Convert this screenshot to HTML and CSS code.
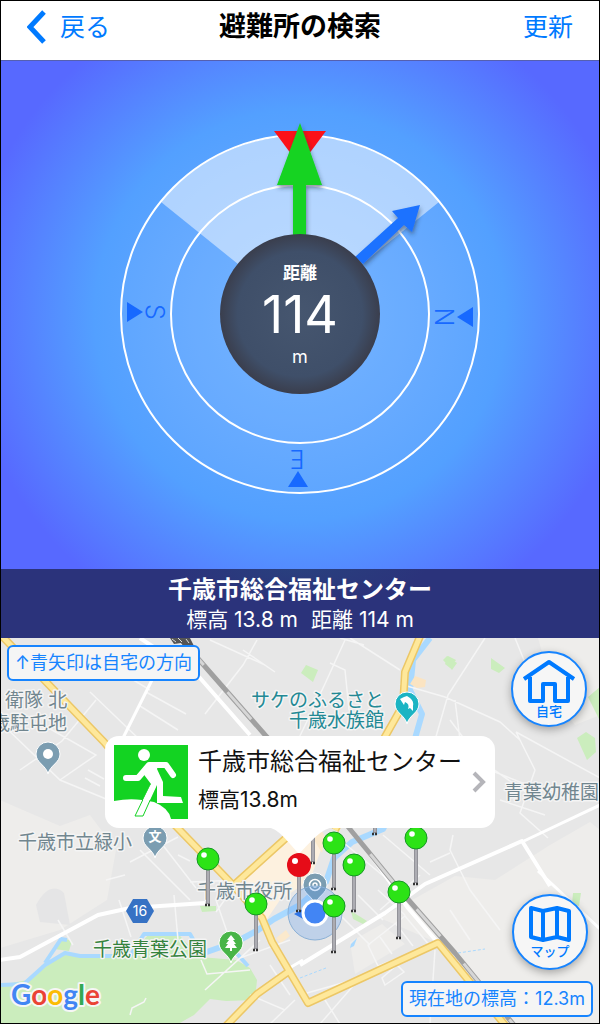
FILE: index.html
```html
<!DOCTYPE html>
<html lang="ja">
<head>
<meta charset="utf-8">
<meta name="viewport" content="width=device-width, initial-scale=1">
<title>避難所の検索</title>
<link rel="stylesheet" href="styles.css">
</head>
<body>
<div class="app">
  <header class="navbar">
    <button class="nav-btn" type="button">
      <svg class="chevron" viewBox="0 0 20 36" aria-hidden="true"><path d="M17 3 3 18 17 33"/></svg>
      戻る
    </button>
    <h1 class="title">避難所の検索</h1>
    <button class="nav-btn nav-end" type="button">更新</button>
  </header>

  <section class="compass" aria-label="コンパス">
    <svg class="dial" viewBox="1 61 598 508" aria-hidden="true">
      <defs>
        <radialGradient id="disc"><stop offset="0" stop-color="#46566f"/><stop offset=".78" stop-color="#3f4f69"/><stop offset="1" stop-color="#3a3e4d"/></radialGradient>
        <filter id="soft" x="-30%" y="-30%" width="160%" height="160%"><feDropShadow dx="1" dy="3" stdDeviation="2" flood-color="#234" flood-opacity=".5"/></filter>
      </defs>
      <circle cx="300" cy="314" r="179" fill="#fff" fill-opacity=".05"/>
      <path d="M300 314 161 202A179 179 0 0 1 439 202Z" fill="#fff" fill-opacity=".5"/>
      <g fill="none" stroke="#fff" stroke-width="2"><circle cx="300" cy="314" r="179"/><circle cx="300" cy="314" r="129"/></g>
      <g fill="#1769ff">
        <path d="M127 302v20l16-10zM473 307v20l-16-10zM288 487h20l-10-16z"/>
        <g class="cardinal">
          <text transform="translate(146 312) rotate(90)">S</text>
          <text transform="translate(454 317) rotate(-90)">N</text>
          <text transform="translate(297 450) rotate(180)">E</text>
        </g>
      </g>
      <path d="M274 131h52l-26 35z" fill="#fb1119"/>
      <g filter="url(#soft)">
        <path d="M300 123 322 185H306V240H293V185H277Z" fill="#13d322"/>
        <path d="M420 205 412 232 404 225 363 264 355 257 398 218 392 211Z" fill="#1b72ff"/>
      </g>
      <circle cx="300" cy="314" r="80" fill="url(#disc)"/>
    </svg>
    <div class="readout">
      <span class="readout-label">距離</span>
      <span class="readout-value">114</span>
      <span class="readout-unit">m</span>
    </div>
  </section>

  <section class="banner">
    <h2 class="banner-name">千歳市総合福祉センター</h2>
    <p class="banner-info"><span>標高 13.8 m</span><span>距離 114 m</span></p>
  </section>

  <section class="map" aria-label="地図">
    <svg class="map-art" viewBox="1 638 598 385">
      <defs>
        <g id="pin">
          <path d="M0 8V45" stroke="#929298" stroke-width="4"/><path d="M0 8V44" stroke="#b5b5bb" stroke-width="1.5"/>
          <path d="M-3 46H3" stroke="#333" stroke-width="2.5" stroke-dasharray="2 1"/>
          <circle r="11" stroke="#159724"/><circle cx="-4" cy="-4" r="2.8" fill="#fff"/>
        </g>
        <path id="drop" d="M0 20C-2 11-12 9-12 0A12 12 0 1 1 12 0C12 9 2 11 0 20Z"/>
      </defs>
      <rect x="0" y="638" width="600" height="386" fill="#e7e7e7"/>
      <g fill="#eeedeb">
        <path d="M0 800 60 826 90 815 116 850 107 900 60 930 0 948ZM538 638H600V715L575 725 556 700ZM380 918 455 876 495 880 550 845 590 822 600 830V1024H505L438 943ZM350 942 382 924 405 944 355 974Z"/>
      </g>
      <path d="M36 905Q50 880 64 893L70 925 40 922Z" fill="#e5e5e6"/>
      <path d="M236 884 286 836H326L310 880 280 900 263 925Z" fill="#fdf1df"/>
      <path d="M313 838l8-9 4 8-3 16zM276 938l10-8 4 6-10 8z" fill="#fbe9cc"/>
      <g fill="#cbedbd">
        <path d="M0 985 28 980 64 953 82 958 130 955 149 934 180 936 200 957 236 960 250 968 257 980 255 1000 226 1001 210 999 194 1015 178 1024H0Z"/>
        <path d="M54 949 63 938 72 941 69 951ZM448 656l8 4-6 8-5-4zM491 658l14 10-6 5-8-4zM588 697l12-10v34zM577 738l9-6 9 6 1 14-9 8zM573 893h8l-2 13-7-2zM351 911l16 10-4 3-10-5zM200 906h16v5l-14 1zM301 673l5-8 12 5-5 12zM443 660l4-4 10 7-5 7z"/>
      </g>
      <g fill="none" stroke="#a9d9ff" stroke-linejoin="round">
        <path stroke-width="6" d="M430 638 413 660 410 690 422 714 414 742 398 800 383 829 352 842 334 858 326 882 300 905 274 919 258 930 238 941 201 954"/>
        <path stroke-width="4" d="M0 985 24 984 45 965 65 953 80 956 130 956 144 934 190 934 202 955M232 948 248 966M45 963 61 939 67 940"/>
        <path stroke-width="1" stroke-dasharray="3 2" d="M300 978 326 968M458 953 485 949"/>
      </g>
      <path d="M351 944l6-6-3 8-4 2z" fill="#a9d9ff"/>
      <g fill="none" stroke="#f5f5f5" stroke-width="1.5">
        <path d="M0 722 60 780 128 808M60 780 96 755 45 726M96 700 62 741 20 770M88 770 104 779M85 778 100 786M90 692 140 740M100 660 150 690M140 706 178 730M146 692 186 714M257 640 243 665 205 714M265 665 210 640M243 650 275 672M240 710 268 735M345 640 324 686 298 740M330 663 345 670 349 710M350 638 400 670M364 645 340 638M485 638 448 695 435 740M515 638 526 665M400 684 445 697 500 722 520 740M455 700 460 740M516 732 600 778M516 732 535 770 520 813 548 838M495 772 540 790 600 792M500 800 545 815M450 720 480 760 530 795M453 835 450 850 470 890 500 930M430 862 450 853M130 862 178 837M140 850 190 900M155 835 196 888M168 820 220 876M178 855 190 861M106 880 125 875M58 920 73 945M119 900 131 937M174 895 178 940M190 882 240 880M216 900 236 958M236 884 216 912M240 958 290 940M201 960 207 974 250 970M270 965 290 995M205 990 260 940M380 910 420 875M358 895 383 920M340 915 370 945M378 890 405 915M368 945 405 916 430 946 378 966ZM380 937 392 954M396 924 413 946M450 910 470 940M338 838 400 890M383 835 430 875M385 985 404 972 397 965 382 978ZM300 995 360 978 320 1024M325 1000 340 1024M430 1024 435 950M130 1015 132 1008 144 1002 146 998M250 995 285 1010M270 1024 295 1000"/>
      </g>
      <g fill="none" stroke="#fff" stroke-linejoin="round">
        <path stroke-width="4" d="M0 960 20 957 98 915 130 908 205 903M300 965 385 913 425 884 522 841 550 886"/>
        <path stroke-width="4" d="M140 638 200 678 250 735M350 828 378 865 408 908 438 943"/>
        <path stroke-width="3" d="M122 740 152 680M524 841 600 805M538 871 600 929M286 970 303 960"/>
      </g>
      <g fill="none" stroke-linejoin="round">
        <path stroke="#ecc766" stroke-width="8" d="M0 634 104 742 166 816 232 884 262 918 272 942 308 1003 438 943 509 1030M235 884 286 838M222 1030 257 994 288 972M421 634 405 672 403 705 382 742 335 830"/>
        <path stroke="#fee89b" stroke-width="5" d="M0 634 104 742 166 816 232 884 262 918 272 942 308 1003 438 943 509 1030M235 884 286 838M222 1030 257 994 288 972M421 634 405 672 403 705 382 742 335 830"/>
        <path stroke="#a0a0a0" stroke-width="5" d="M180 638 266 736 345 823 398 888 455 953 518 1030"/>
        <path stroke="#d6d6d6" stroke-width="3" stroke-dasharray="36 36" d="M180 638 266 736 345 823 398 888 455 953 518 1030"/>
      </g>
      <path d="M170 638h20l5 10-9 1-5-6-7 1z" fill="#555"/><path d="m172 639 4 3m2-4 4 4m4-3 3 4" stroke="#ddd"/>
      <path d="M410 684l5-8 11 4-1 7-8 1z" fill="#fbe4c2"/>

      <g class="place">
        <text class="gray" x="5" y="707">衛隊 北</text>
        <text class="gray" x="-9" y="730">歳駐屯地</text>
        <text class="gray" x="18" y="849">千歳市立緑小</text>
        <text class="gray" x="504" y="799">青葉幼稚園</text>
        <text class="gray" x="197" y="898">千歳市役所</text>
        <text class="teal" x="251" y="707">サケのふるさと</text>
        <text class="teal" x="289" y="727">千歳水族館</text>
        <text class="green" x="93" y="956">千歳青葉公園</text>
      </g>

      <g stroke="#fff" stroke-width="1">
        <use href="#drop" x="48" y="754" fill="#7b9db1"/>
        <use href="#drop" x="155" y="838" fill="#7b9db1"/>
        <use href="#drop" x="315" y="885" fill="#7b9db1"/>
        <use href="#drop" x="407" y="704" fill="#1bb4c3"/>
        <use href="#drop" x="231" y="943" fill="#48b548"/>
      </g>
      <circle cx="48" cy="754" r="5" fill="#fff"/>
      <text class="poi" x="155" y="841">文</text>
      <g fill="none" stroke="#fff" stroke-width="1.5"><circle cx="315" cy="885" r="5.5"/><circle cx="315" cy="885" r="2"/></g>
      <path d="M400 699 404 697 407 696 410 698Q414 701 413 706L413 711 410 708 408 709Q410 704 405 702L404 705 402 702Z" fill="#fff"/>
      <path d="M231 935l4 5h-2l3 4h-2l3 4h-5v3h-2v-3h-5l3-4h-2l3-4h-2z" fill="#fff"/>

      <path d="M126 911 133 899H147L154 911 147 923H133Z" fill="#3672c4"/>
      <text class="route" x="140" y="916">16</text>

      <circle cx="315" cy="913" r="27" fill="#5b9bf0" fill-opacity=".28" stroke="#8ab0d6"/>
      <path d="M294 914l11-6v12z" fill="#2f76e8"/>
      <circle cx="315" cy="913" r="12" fill="#4285f4" stroke="#fff" stroke-width="3"/>

      <g fill="#2ce316">
        <use href="#pin" x="313" y="817"/><use href="#pin" x="375" y="788"/>
        <use href="#pin" x="208" y="859"/><use href="#pin" x="416" y="838"/>
        <use href="#pin" x="334" y="843"/><use href="#pin" x="354" y="865"/>
        <use href="#pin" x="399" y="892"/><use href="#pin" x="256" y="904"/>
        <use href="#pin" x="334" y="906"/>
      </g>
      <path d="M267 827C278 829 283 836 299 854 316 836 322 829 334 827Z" fill="#fff"/>
      <use href="#pin" x="299" y="865" fill="#e60c18"/><circle cx="299" cy="865" r="12" fill="#e60c18"/><circle cx="295" cy="861" r="3" fill="#fff"/>
      <text class="google" x="11" y="1005"><tspan fill="#4285f4">G</tspan><tspan fill="#ea4335">o</tspan><tspan fill="#fbbc05">o</tspan><tspan fill="#4285f4">g</tspan><tspan fill="#34a853">l</tspan><tspan fill="#ea4335">e</tspan></text>
    </svg>

    <p class="chip chip-home">↑青矢印は自宅の方向</p>
    <button class="callout" type="button">
      <svg class="exit" viewBox="0 0 74 74" aria-hidden="true">
        <path fill="#13d322" d="M0 0H74V74H0Z"/>
        <path fill="#fff" d="M0 56Q15 53 28 55L40 57Q55 63 57 74H0Z"/>
        <circle cx="30" cy="10" r="6" fill="#fff"/>
        <path fill="none" stroke="#fff" stroke-width="6" stroke-linecap="round" stroke-linejoin="round" d="M12 33H24L35 20H52L59 30"/>
        <path fill="#fff" stroke="#13d322" stroke-width="1" d="M36 40 21 71H29L42 42"/>
        <path fill="#fff" d="M28 27 35 18H45L43 24 49 37V51L67 52 69 58H43V40L36 55H29L37 39Z"/>
      </svg>
      <span class="callout-text">
        <span class="callout-name">千歳市総合福祉センター</span>
        <span class="callout-alt">標高13.8m</span>
      </span>
      <svg class="more" viewBox="0 0 14 22" aria-hidden="true"><path d="M2 2 11 11 2 20"/></svg>
    </button>
    <button class="round round-home" type="button">
      <svg class="home-icon" viewBox="0 0 54 44" aria-hidden="true"><path d="M2 20 27 3 52 20M8 18V42H21V25H33V42H46V18"/></svg>
      <span>自宅</span>
    </button>
    <button class="round round-map" type="button">
      <svg class="map-icon" viewBox="0 0 42 38" aria-hidden="true"><path d="M2 3 14 6 28 3 40 6V35L28 32 14 35 2 32ZM14 6V35M28 3V32"/></svg>
      <span>マップ</span>
    </button>
    <p class="chip chip-alt">現在地の標高：12.3m</p>
  </section>
</div>
</body>
</html>
```
FILE: styles.css
```css
* { box-sizing: border-box; }

body {
  margin: 0;
  font-family: Inter, "Noto Sans CJK JP", sans-serif;
  background: #fff;
}

h1, h2, p { margin: 0; }

button {
  margin: 0;
  padding: 0;
  border: 0;
  background: none;
  font: inherit;
  color: #007aff;
  cursor: pointer;
}

svg { display: block; }

.app {
  min-height: 100vh;
  border: 1px solid #000;
  overflow: hidden;
}

.navbar {
  display: grid;
  grid-template-columns: 1fr auto 1fr;
  align-items: center;
  padding: 8px 26px 15px;
}

.nav-btn {
  display: flex;
  align-items: center;
  justify-self: start;
  gap: 13px;
  font-size: 25px;
  line-height: 36px;
}

.nav-end { justify-self: end; }

.chevron {
  width: 20px;
  height: 36px;
  fill: none;
  stroke: #007aff;
  stroke-width: 5;
}

.title {
  font-size: 27px;
  line-height: 36px;
  font-weight: 700;
}

.compass {
  display: grid;
  place-items: center;
  border-top: 1px solid #5560b0;
  background: radial-gradient(circle at 50% 50%, #72b1ff 0, #53a0ff 205px, #5769ff 335px);
}

.dial {
  grid-area: 1 / 1;
  width: 100%;
}

.cardinal {
  font-size: 25px;
  font-weight: 300;
  text-anchor: middle;
}

.readout {
  grid-area: 1 / 1;
  display: flex;
  flex-direction: column;
  align-items: center;
  color: #fff;
}

.readout-label {
  font-size: 17px;
  line-height: 24px;
  font-weight: 700;
}

.readout-value {
  font-size: 52px;
  line-height: 60px;
  font-weight: 400;
}

.readout-unit {
  font-size: 18px;
  line-height: 24px;
}

.banner {
  padding: 5px 0 4px;
  background: radial-gradient(ellipse at 50% 0, #29407e 0, #2b337b 30%);
  color: #fff;
  text-align: center;
}

.banner-name {
  font-size: 24px;
  line-height: 32px;
  font-weight: 700;
}

.banner-info {
  display: flex;
  justify-content: center;
  gap: 13px;
  font-size: 21px;
  line-height: 28px;
  font-weight: 400;
}

.map { position: relative; }

.map-art { width: 100%; }

.place text {
  font-size: 19px;
  stroke: #f4f4f4;
  stroke-width: 3px;
  stroke-linejoin: round;
  paint-order: stroke;
}

.place .gray { fill: #71868f; }
.place .teal { fill: #238994; }
.place .green { fill: #35833d; }

.poi {
  font-size: 13px;
  font-weight: 700;
  fill: #fff;
  text-anchor: middle;
}

.route {
  font-size: 14px;
  fill: #fff;
  text-anchor: middle;
}

.google {
  font-family: Lato, sans-serif;
  font-size: 28px;
  font-weight: 700;
  stroke: #f6f6f6;
  stroke-width: 4px;
  stroke-linejoin: round;
  paint-order: stroke;
}

.chip {
  position: absolute;
  padding: 0 6px;
  border: 2px solid #1684ff;
  border-radius: 6px;
  background: #f5f5f5;
  color: #1684ff;
  font-size: 18px;
  line-height: 32px;
  white-space: nowrap;
}

.chip-home {
  top: 7px;
  left: 6px;
}

.chip-alt {
  right: 6px;
  bottom: 6px;
}

.callout {
  position: absolute;
  top: 98px;
  left: 50%;
  display: flex;
  align-items: center;
  gap: 10px;
  width: 390px;
  height: 92px;
  padding: 9px;
  border-radius: 14px;
  background: #fff;
  color: #111;
  text-align: left;
  transform: translateX(-50%);
}

.exit {
  flex: none;
  width: 74px;
  height: 74px;
}

.callout-text {
  display: flex;
  flex: 1;
  flex-direction: column;
  gap: 8px;
  padding-bottom: 4px;
}

.callout-name {
  font-size: 24px;
  line-height: 32px;
  white-space: nowrap;
}

.callout-alt {
  font-size: 21px;
  line-height: 28px;
}

.more {
  flex: none;
  width: 14px;
  height: 22px;
  fill: none;
  stroke: #b5b5ba;
  stroke-width: 4;
}

.round {
  position: absolute;
  display: flex;
  flex-direction: column;
  align-items: center;
  justify-content: center;
  width: 76px;
  height: 76px;
  border: 2px solid #1684ff;
  border-radius: 50%;
  background: #f6f6f6;
  box-shadow: 0 3px 8px rgb(0 0 0 / 30%);
  font-size: 13px;
  line-height: 16px;
  font-weight: 500;
}

.round svg {
  fill: none;
  stroke: #007aff;
  stroke-width: 4;
  stroke-linejoin: round;
}

.round-home {
  top: 13px;
  right: 12px;
}

.round-map {
  right: 11px;
  bottom: 53px;
}

.home-icon {
  width: 54px;
  height: 44px;
}

.map-icon {
  width: 42px;
  height: 38px;
}
```
